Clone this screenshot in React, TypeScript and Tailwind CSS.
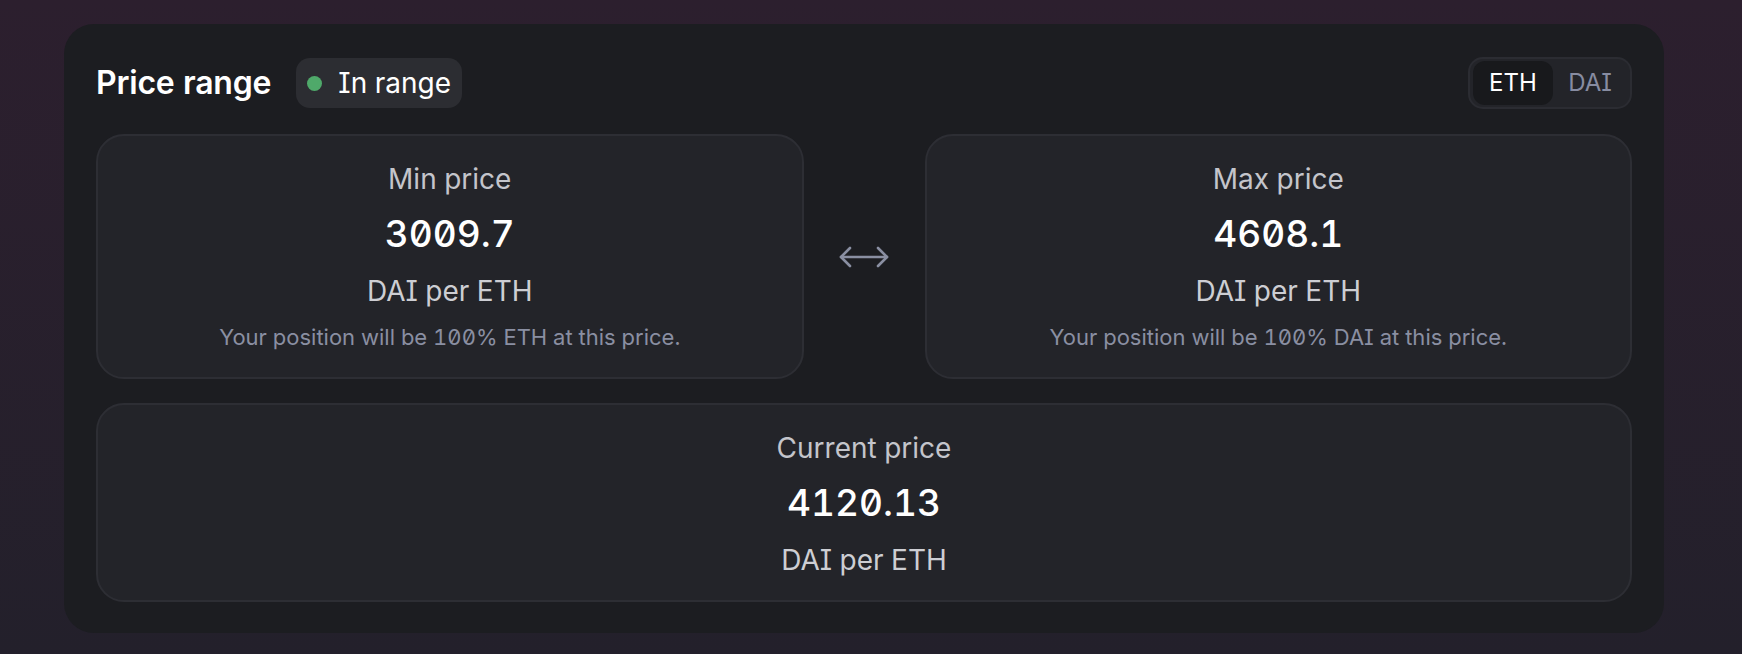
import React from "react";

const font = "[font-family:Inter,'Noto_Sans',sans-serif] [font-feature-settings:'cv08','zero','tnum']";

function PriceCard({
  label,
  value,
  unit,
  note,
}: {
  label: string;
  value: string;
  unit: string;
  note?: string;
}) {
  return (
    <div
      className={`flex flex-1 flex-col items-center rounded-[28px] border-2 border-[#2d2e34] bg-[#232429] pt-[24px] ${
        note ? "pb-[25px]" : "pb-[21px]"
      }`}
    >
      <div className="text-[28px] leading-[38px] text-[#c4c5cb]">{label}</div>
      <div className="mt-[14px] text-[37px] font-medium leading-[44px] text-white">{value}</div>
      <div className="mt-[16px] text-[28px] leading-[38px] text-[#cdced3]">{unit}</div>
      {note && (
        <div className="mt-[12px] text-[22px] leading-[30px] text-[#8a8fa2]">{note}</div>
      )}
    </div>
  );
}

export default function App() {
  return (
    <div className={`h-[654px] w-full bg-gradient-to-b from-[#2c1f2e] to-[#23202b] pt-[24px] pl-[64px] ${font}`}>
      <div className="w-[1600px] rounded-[30px] bg-[#1c1d21] px-[32px] pt-[33px] pb-[31px]">
        <div className="flex h-[52px] items-center justify-between">
          <div className="flex items-center gap-[25px]">
            <div className="text-[32px] font-semibold tracking-[-0.2px] text-white">Price range</div>
            <div className="flex h-[50px] items-center gap-[16px] rounded-[14px] bg-[#2c2d32] pl-[11px] pr-[11px]">
              <span className="h-[15px] w-[15px] rounded-full bg-[#4fa96a]" />
              <span className="text-[28px] text-white">In range</span>
            </div>
          </div>
          <div className="flex h-[52px] items-center rounded-[15px] border-2 border-[#2b2c32] bg-[#232429] p-[3px]">
            <div className="flex h-[44px] w-[80px] items-center justify-center rounded-[12px] bg-[#18191c] text-[24px] text-white">ETH</div>
            <div className="flex h-[44px] w-[74px] items-center justify-center text-[24px] text-[#878ca1]">DAI</div>
          </div>
        </div>

        <div className="mt-[25px] flex items-stretch">
          <PriceCard
            label="Min price"
            value="3009.7"
            unit="DAI per ETH"
            note="Your position will be 100% ETH at this price."
          />
          <div className="flex w-[121px] shrink-0 items-center justify-center">
            <svg width="52" height="22" viewBox="0 0 52 22" fill="none" stroke="#8a8fa2" strokeWidth="2.6" strokeLinecap="round" strokeLinejoin="round">
              <path d="M3 11h46" />
              <path d="M12 2 3 11l9 9" />
              <path d="M40 2l9 9-9 9" />
            </svg>
          </div>
          <PriceCard
            label="Max price"
            value="4608.1"
            unit="DAI per ETH"
            note="Your position will be 100% DAI at this price."
          />
        </div>

        <div className="mt-[24px] flex">
          <PriceCard label="Current price" value="4120.13" unit="DAI per ETH" />
        </div>
      </div>
    </div>
  );
}
